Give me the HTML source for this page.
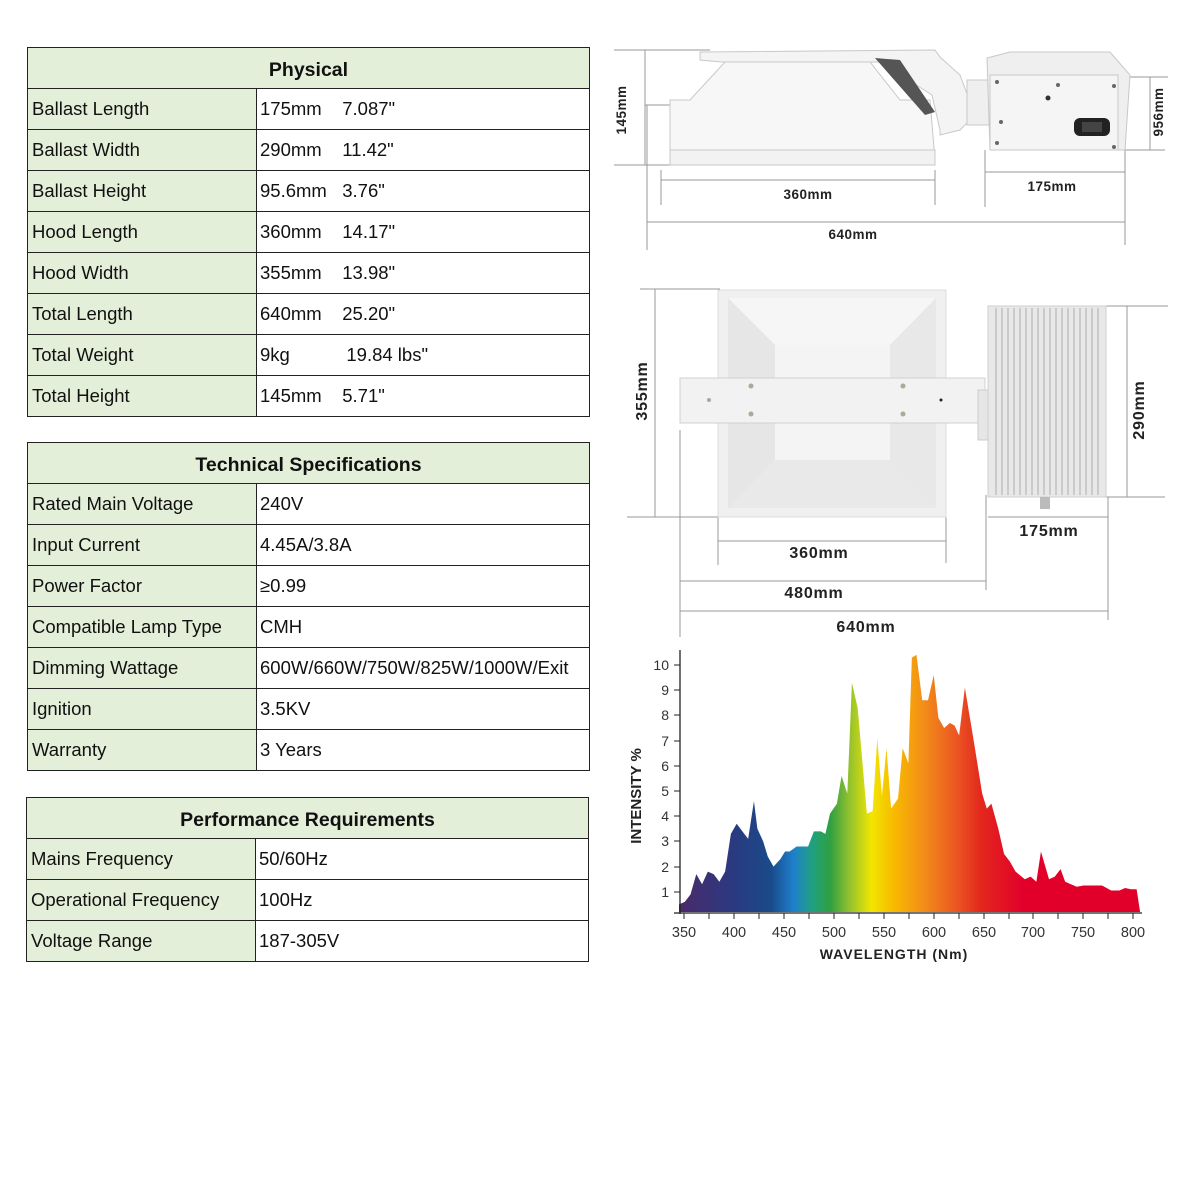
<!DOCTYPE html>
<html><head><meta charset="utf-8"><style>
body{margin:0;width:1199px;height:1199px;background:#fff;position:relative;overflow:hidden;font-family:"Liberation Sans",Arial,sans-serif;}
.t{position:absolute;border:1px solid #222;box-sizing:border-box;}
.r{position:absolute;left:0;right:0;border-top:1px solid #222;height:41px;box-sizing:border-box;font-size:18.5px;color:#111;}
.r .a{position:absolute;left:0;top:0;bottom:0;background:#e3efd9;border-right:1px solid #222;padding-left:4px;line-height:40px;}
.r .b{position:absolute;top:0;bottom:0;right:0;padding-left:3px;line-height:40px;white-space:nowrap;overflow:hidden;}
.h{position:absolute;left:0;right:0;top:0;height:40px;background:#e3efd9;text-align:center;font-weight:bold;font-size:19.5px;line-height:44px;color:#111;}
svg{position:absolute;left:0;top:0}
</style></head><body>

<div class="t" style="left:27px;top:47px;width:563px;height:370px">
<div class="h">Physical</div>
<div class="r" style="top:40px"><div class="a" style="width:224px">Ballast Length</div><div class="b" style="left:229px">175mm&nbsp;&nbsp;&nbsp; 7.087"</div></div>
<div class="r" style="top:81px"><div class="a" style="width:224px">Ballast Width</div><div class="b" style="left:229px">290mm&nbsp;&nbsp;&nbsp; 11.42"</div></div>
<div class="r" style="top:122px"><div class="a" style="width:224px">Ballast Height</div><div class="b" style="left:229px">95.6mm&nbsp;&nbsp; 3.76"</div></div>
<div class="r" style="top:163px"><div class="a" style="width:224px">Hood Length</div><div class="b" style="left:229px">360mm&nbsp;&nbsp;&nbsp; 14.17"</div></div>
<div class="r" style="top:204px"><div class="a" style="width:224px">Hood Width</div><div class="b" style="left:229px">355mm&nbsp;&nbsp;&nbsp; 13.98"</div></div>
<div class="r" style="top:245px"><div class="a" style="width:224px">Total Length</div><div class="b" style="left:229px">640mm&nbsp;&nbsp;&nbsp; 25.20"</div></div>
<div class="r" style="top:286px"><div class="a" style="width:224px">Total Weight</div><div class="b" style="left:229px">9kg&nbsp;&nbsp;&nbsp;&nbsp;&nbsp;&nbsp;&nbsp;&nbsp;&nbsp;&nbsp; 19.84 lbs"</div></div>
<div class="r" style="top:327px"><div class="a" style="width:224px">Total Height</div><div class="b" style="left:229px">145mm&nbsp;&nbsp;&nbsp; 5.71"</div></div>
</div>

<div class="t" style="left:27px;top:442px;width:563px;height:329px">
<div class="h">Technical Specifications</div>
<div class="r" style="top:40px"><div class="a" style="width:224px">Rated Main Voltage</div><div class="b" style="left:229px">240V</div></div>
<div class="r" style="top:81px"><div class="a" style="width:224px">Input Current</div><div class="b" style="left:229px">4.45A/3.8A</div></div>
<div class="r" style="top:122px"><div class="a" style="width:224px">Power Factor</div><div class="b" style="left:229px">≥0.99</div></div>
<div class="r" style="top:163px"><div class="a" style="width:224px">Compatible Lamp Type</div><div class="b" style="left:229px">CMH</div></div>
<div class="r" style="top:204px"><div class="a" style="width:224px">Dimming Wattage</div><div class="b" style="left:229px">600W/660W/750W/825W/1000W/Exit</div></div>
<div class="r" style="top:245px"><div class="a" style="width:224px">Ignition</div><div class="b" style="left:229px">3.5KV</div></div>
<div class="r" style="top:286px"><div class="a" style="width:224px">Warranty</div><div class="b" style="left:229px">3 Years</div></div>
</div>

<div class="t" style="left:26px;top:797px;width:563px;height:165px">
<div class="h">Performance Requirements</div>
<div class="r" style="top:40px"><div class="a" style="width:224px">Mains Frequency</div><div class="b" style="left:229px">50/60Hz</div></div>
<div class="r" style="top:81px"><div class="a" style="width:224px">Operational Frequency</div><div class="b" style="left:229px">100Hz</div></div>
<div class="r" style="top:122px"><div class="a" style="width:224px">Voltage Range</div><div class="b" style="left:229px">187-305V</div></div>
</div>

<svg width="1199" height="1199" viewBox="0 0 1199 1199" font-family="Liberation Sans, Arial, sans-serif">
<defs>
<linearGradient id="sp" gradientUnits="userSpaceOnUse" x1="345" y1="0" x2="743" y2="0">
<stop offset="0" stop-color="#4a2a6a"/>
<stop offset="0.12" stop-color="#2a3a80"/>
<stop offset="0.2" stop-color="#1a4a8a"/>
<stop offset="0.25" stop-color="#1e80cc"/>
<stop offset="0.29" stop-color="#20a080"/>
<stop offset="0.33" stop-color="#30a040"/>
<stop offset="0.37" stop-color="#90c030"/>
<stop offset="0.42" stop-color="#f2e600"/>
<stop offset="0.47" stop-color="#f8b800"/>
<stop offset="0.53" stop-color="#f39018"/>
<stop offset="0.6" stop-color="#ec5a22"/>
<stop offset="0.66" stop-color="#e3261e"/>
<stop offset="0.75" stop-color="#e2002a"/>
<stop offset="1" stop-color="#e0002a"/>
</linearGradient>
</defs>

<!-- TOP DIAGRAM -->
<g stroke="#999" stroke-width="1" fill="none">
<line x1="614" y1="50" x2="710" y2="50"/><line x1="645" y1="50" x2="645" y2="165"/><line x1="614" y1="165" x2="670" y2="165"/>
<line x1="645" y1="105" x2="670" y2="105"/>
<line x1="661" y1="180" x2="935" y2="180"/><line x1="661" y1="170" x2="661" y2="205"/><line x1="935" y1="170" x2="935" y2="205"/>
<line x1="985" y1="172" x2="1125" y2="172"/><line x1="985" y1="150" x2="985" y2="207"/>
<line x1="647" y1="222" x2="1125" y2="222"/><line x1="647" y1="105" x2="647" y2="250"/><line x1="1125" y1="150" x2="1125" y2="245"/>
<line x1="1130" y1="77" x2="1168" y2="77"/><line x1="1150" y1="77" x2="1150" y2="150"/><line x1="1125" y1="150" x2="1165" y2="150"/>
</g>
<g stroke="#c8c8c8" stroke-width="1">
<polygon points="700,52 935,50 940,57 960,75 975,115 960,130 940,135 940,130 932,95 880,62 722,62 700,60" fill="#f4f4f4"/>
<polygon points="670,100 670,160 935,160 930,100 900,100 870,62 725,62 690,100" fill="#f7f7f7"/>
<polygon points="670,150 935,150 935,165 670,165" fill="#f2f2f2"/>
<polygon points="875,58 900,60 935,112 925,115" fill="#555" stroke="none"/>
<rect x="967" y="80" width="22" height="45" fill="#efefef"/>
<polygon points="987,58 1010,52 1110,52 1130,75 1125,150 990,150" fill="#efefef"/>
<rect x="990" y="75" width="128" height="75" fill="#f5f5f5"/>
</g>
<rect x="1074" y="118" width="36" height="18" rx="6" fill="#222"/>
<rect x="1082" y="122" width="20" height="10" fill="#444"/>
<circle cx="1048" cy="98" r="2.5" fill="#333"/>
<g fill="#666"><circle cx="997" cy="82" r="2"/><circle cx="1114" cy="86" r="2"/><circle cx="1001" cy="122" r="2"/><circle cx="997" cy="143" r="2"/><circle cx="1114" cy="147" r="2"/><circle cx="1058" cy="85" r="2"/></g>
<g font-size="13.5" fill="#222" font-weight="bold" letter-spacing="0.5">
<text x="808" y="199" text-anchor="middle">360mm</text>
<text x="1052" y="191" text-anchor="middle">175mm</text>
<text x="853" y="239" text-anchor="middle">640mm</text>
<text transform="translate(626,110) rotate(-90)" text-anchor="middle">145mm</text>
<text transform="translate(1163,112) rotate(-90)" text-anchor="middle">956mm</text>
</g>

<!-- MIDDLE DIAGRAM -->
<g stroke="#999" stroke-width="1" fill="none">
<line x1="640" y1="289" x2="720" y2="289"/><line x1="655" y1="289" x2="655" y2="517"/><line x1="627" y1="517" x2="718" y2="517"/>
<line x1="718" y1="541" x2="946" y2="541"/><line x1="718" y1="517" x2="718" y2="565"/><line x1="946" y1="517" x2="946" y2="563"/>
<line x1="680" y1="581" x2="986" y2="581"/><line x1="680" y1="430" x2="680" y2="637"/><line x1="986" y1="495" x2="986" y2="590"/>
<line x1="680" y1="611" x2="1108" y2="611"/><line x1="1108" y1="497" x2="1108" y2="620"/>
<line x1="988" y1="517" x2="1108" y2="517"/>
<line x1="1105" y1="306" x2="1168" y2="306"/><line x1="1127" y1="306" x2="1127" y2="497"/><line x1="1105" y1="497" x2="1165" y2="497"/>
</g>
<rect x="718" y="290" width="228" height="227" fill="#f0f0f0" stroke="#ddd"/>
<polygon points="728,298 936,298 890,345 775,345" fill="#f6f6f6"/>
<polygon points="728,508 936,508 890,460 775,460" fill="#e9e9e9"/>
<polygon points="728,298 775,345 775,460 728,508" fill="#e6e6e6"/>
<polygon points="936,298 890,345 890,460 936,508" fill="#e8e8e8"/>
<rect x="775" y="345" width="115" height="115" fill="#f4f4f4"/>
<polygon points="680,378 985,378 985,423 680,423" fill="#f2f2f2" stroke="#d0d0d0"/>
<g fill="#aa9"><circle cx="751" cy="386" r="2.5"/><circle cx="751" cy="414" r="2.5"/><circle cx="903" cy="386" r="2.5"/><circle cx="903" cy="414" r="2.5"/><circle cx="709" cy="400" r="2"/></g>
<circle cx="941" cy="400" r="1.5" fill="#222"/>
<rect x="978" y="390" width="14" height="50" fill="#e6e6e6" stroke="#ccc"/>
<rect x="988" y="306" width="118" height="191" fill="#e8e8e8" stroke="#cfcfcf"/>
<g stroke="#c0c0c0" stroke-width="1.5">
<line x1="996" y1="308" x2="996" y2="495"/><line x1="1002" y1="308" x2="1002" y2="495"/><line x1="1008" y1="308" x2="1008" y2="495"/><line x1="1014" y1="308" x2="1014" y2="495"/><line x1="1020" y1="308" x2="1020" y2="495"/><line x1="1026" y1="308" x2="1026" y2="495"/><line x1="1032" y1="308" x2="1032" y2="495"/><line x1="1038" y1="308" x2="1038" y2="495"/><line x1="1044" y1="308" x2="1044" y2="495"/><line x1="1050" y1="308" x2="1050" y2="495"/><line x1="1056" y1="308" x2="1056" y2="495"/><line x1="1062" y1="308" x2="1062" y2="495"/><line x1="1068" y1="308" x2="1068" y2="495"/><line x1="1074" y1="308" x2="1074" y2="495"/><line x1="1080" y1="308" x2="1080" y2="495"/><line x1="1086" y1="308" x2="1086" y2="495"/><line x1="1092" y1="308" x2="1092" y2="495"/><line x1="1098" y1="308" x2="1098" y2="495"/>
</g>
<rect x="1040" y="497" width="10" height="12" fill="#bbb"/>
<g font-size="16" fill="#222" font-weight="bold" letter-spacing="0.8">
<text x="819" y="558" text-anchor="middle">360mm</text>
<text x="814" y="598" text-anchor="middle">480mm</text>
<text x="866" y="632" text-anchor="middle">640mm</text>
<text x="1049" y="536" text-anchor="middle">175mm</text>
<text transform="translate(647,391) rotate(-90)" text-anchor="middle">355mm</text>
<text transform="translate(1144,410) rotate(-90)" text-anchor="middle">290mm</text>
</g>

<!-- SPECTRUM -->
<g transform="matrix(0.998,0,0,-25.2,334.7,917)">
<g transform="translate(345,0) scale(1.155,1) translate(-345,0)">
<polygon fill="url(#sp)" points="345,0.2 345,0.5 350,0.6 355,0.9 360,1.7 365,1.3 370,1.8 375,1.7 380,1.4 385,1.8 390,3.3 395,3.7 400,3.4 405,3.1 410,4.6 413,3.5 418,3.0 422,2.4 427,2.0 433,2.3 437,2.6 441,2.6 447,2.8 457,2.8 462,3.4 468,3.4 472,3.3 476,4.1 482,4.5 486,5.6 491,4.9 495,9.3 500,8.3 508,4.1 513,4.2 517,7.1 521,4.8 525,6.7 529,4.3 535,4.7 539,6.7 544,6.1 547,10.3 551,10.4 556,8.6 561,8.6 566,9.6 570,7.9 575,7.5 580,7.7 584,7.6 588,7.2 593,9.1 601,6.9 608,4.9 612,4.3 616,4.5 622,3.5 627,2.5 632,2.2 637,1.8 645,1.5 650,1.6 655,1.4 659,2.6 666,1.5 671,1.6 676,1.9 680,1.4 690,1.2 696,1.25 712,1.25 720,1.05 727,1.05 732,1.15 737,1.1 742,1.1 745,0.2"/>
</g>
</g>
<g stroke="#222" stroke-width="1.3">
<line x1="680" y1="650" x2="680" y2="914"/><line x1="674" y1="913" x2="1142" y2="913"/>
</g>
<g stroke="#222" stroke-width="1">
<line x1="674" y1="665" x2="680" y2="665"/><line x1="674" y1="690" x2="680" y2="690"/><line x1="674" y1="715" x2="680" y2="715"/><line x1="674" y1="741" x2="680" y2="741"/><line x1="674" y1="766" x2="680" y2="766"/><line x1="674" y1="791" x2="680" y2="791"/><line x1="674" y1="816" x2="680" y2="816"/><line x1="674" y1="841" x2="680" y2="841"/><line x1="674" y1="867" x2="680" y2="867"/><line x1="674" y1="892" x2="680" y2="892"/>
<line x1="684" y1="913" x2="684" y2="919"/><line x1="709" y1="913" x2="709" y2="919"/><line x1="734" y1="913" x2="734" y2="919"/><line x1="759" y1="913" x2="759" y2="919"/><line x1="784" y1="913" x2="784" y2="919"/><line x1="809" y1="913" x2="809" y2="919"/><line x1="834" y1="913" x2="834" y2="919"/><line x1="859" y1="913" x2="859" y2="919"/><line x1="884" y1="913" x2="884" y2="919"/><line x1="909" y1="913" x2="909" y2="919"/><line x1="934" y1="913" x2="934" y2="919"/><line x1="959" y1="913" x2="959" y2="919"/><line x1="984" y1="913" x2="984" y2="919"/><line x1="1009" y1="913" x2="1009" y2="919"/><line x1="1033" y1="913" x2="1033" y2="919"/><line x1="1058" y1="913" x2="1058" y2="919"/><line x1="1083" y1="913" x2="1083" y2="919"/><line x1="1108" y1="913" x2="1108" y2="919"/><line x1="1133" y1="913" x2="1133" y2="919"/>
</g>
<g font-size="14" fill="#333" text-anchor="end">
<text x="669" y="670">10</text><text x="669" y="695">9</text><text x="669" y="720">8</text><text x="669" y="746">7</text><text x="669" y="771">6</text><text x="669" y="796">5</text><text x="669" y="821">4</text><text x="669" y="846">3</text><text x="669" y="872">2</text><text x="669" y="897">1</text>
</g>
<g font-size="14.5" fill="#333" text-anchor="middle">
<text x="684" y="937">350</text><text x="734" y="937">400</text><text x="784" y="937">450</text><text x="834" y="937">500</text><text x="884" y="937">550</text><text x="934" y="937">600</text><text x="984" y="937">650</text><text x="1033" y="937">700</text><text x="1083" y="937">750</text><text x="1133" y="937">800</text>
</g>
<text x="894" y="959" font-size="14" font-weight="bold" fill="#222" text-anchor="middle" letter-spacing="1">WAVELENGTH (Nm)</text>
<text transform="translate(641,796) rotate(-90)" font-size="15" font-weight="bold" fill="#222" text-anchor="middle">INTENSITY %</text>
</svg>
</body></html>
